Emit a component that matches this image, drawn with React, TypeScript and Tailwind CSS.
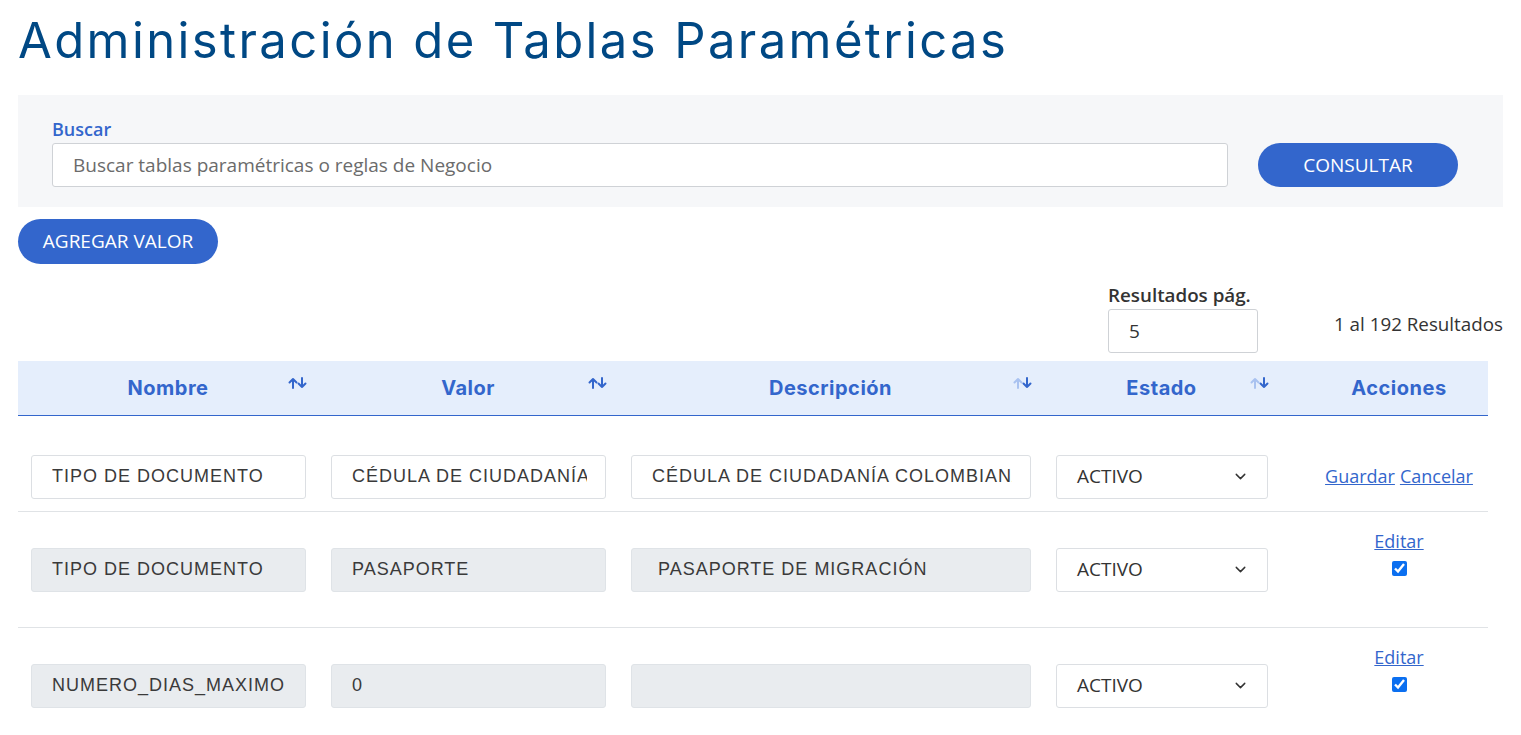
import React from "react";
import { ChevronDown } from "lucide-react";

const ui = { fontFamily: '"Open Sans", "Noto Sans", sans-serif' };
const mont = { fontFamily: 'Inter, "Noto Sans", sans-serif' };
const val = { fontFamily: '"Liberation Sans", Arial, sans-serif' };

function SortIcon({ lightUp }: { lightUp?: boolean }) {
  const up = lightUp ? "#a9c2f0" : "#3366cc";
  const down = "#3366cc";
  return (
    <svg width="20" height="12" viewBox="0 0 20 12" fill="none">
      <path d="M5 11V2M1.5 5.5L5 2l3.5 3.5" stroke={up} strokeWidth="2" strokeLinecap="round" strokeLinejoin="round" />
      <path d="M14 1v9M10.5 6.5L14 10l3.5-3.5" stroke={down} strokeWidth="2" strokeLinecap="round" strokeLinejoin="round" />
    </svg>
  );
}

function HeadCell({ w, label, sort, lightUp, pl }: { w: string; label: string; sort?: boolean; lightUp?: boolean; pl?: string }) {
  return (
    <div className={`relative flex items-center justify-center h-full ${w} ${pl ?? ""}`}>
      <span className="text-[20px] font-bold text-[#3366cc] tracking-[0.5px]" style={mont}>
        {label}
      </span>
      {sort && (
        <span className="absolute right-[10px] top-[16px]">
          <SortIcon lightUp={lightUp} />
        </span>
      )}
    </div>
  );
}

function ValInput({ text, disabled, w }: { text: string; disabled?: boolean; w: string }) {
  return (
    <div
      className={`${w} h-[44px] flex items-center pl-[20px] pr-[18px] rounded-[3px] border ${
        disabled ? "bg-[#e9ecef] border-[#dfe3e7]" : "bg-white border-[#dcdfe3]"
      }`}
    >
      <div className="flex-1 overflow-hidden whitespace-pre text-[18px] text-[#3a3a3a] tracking-[1px]" style={val}>
        {text}
      </div>
    </div>
  );
}

function EstadoSelect() {
  return (
    <div className="w-[212px] h-[44px] flex items-center justify-between pl-[20px] pr-[18px] bg-white border border-[#dcdfe3] rounded-[3px]">
      <span className="text-[19px] text-[#333]" style={ui}>ACTIVO</span>
      <ChevronDown size={17} strokeWidth={2} color="#333" />
    </div>
  );
}

type Row = { nombre: string; valor: string; desc: string; edit?: boolean };

const rows: Row[] = [
  { nombre: "TIPO DE DOCUMENTO", valor: "CÉDULA DE CIUDADANÍA", desc: "CÉDULA DE CIUDADANÍA COLOMBIANA", edit: true },
  { nombre: "TIPO DE DOCUMENTO", valor: "PASAPORTE", desc: " PASAPORTE DE MIGRACIÓN" },
  { nombre: "NUMERO_DIAS_MAXIMO", valor: "0", desc: "" },
];

export default function App() {
  return (
    <div className="bg-white min-h-[735px] pl-[18px] pr-[18px] overflow-hidden" style={ui}>
      <h1 className="text-[49px] leading-[58px] pt-[12px] text-[#004884] font-normal tracking-[2.4px] whitespace-nowrap" style={mont}>
        Administración de Tablas Paramétricas
      </h1>

      <div className="mt-[25px] w-[1485px] h-[112px] bg-[#f6f7f9] flex items-end pl-[34px] pr-[45px] pb-[20px] gap-[30px]">
        <div className="flex-1 flex flex-col">
          <label className="text-[18px] font-semibold text-[#3366cc] leading-[22px] mb-[3px]">Buscar</label>
          <div className="h-[44px] bg-white border border-[#cfd2d6] rounded-[3px] flex items-center pl-[20px]">
            <span className="text-[19px] text-[#6b6b6b]">Buscar tablas paramétricas o reglas de Negocio</span>
          </div>
        </div>
        <button className="w-[200px] h-[44px] rounded-full bg-[#3366cc] text-white text-[19px]">CONSULTAR</button>
      </div>

      <button className="mt-[12px] w-[200px] h-[45px] rounded-full bg-[#3366cc] text-white text-[19px]">AGREGAR VALOR</button>

      <div className="w-[1485px] flex justify-end items-end mt-[19px]">
        <div className="flex flex-col">
          <span className="text-[18.8px] font-semibold text-[#333] leading-[24px] mb-[2px]">Resultados pág.</span>
          <div className="w-[150px] h-[44px] border border-[#cfd2d6] rounded-[3px] flex items-center pl-[20px] bg-white">
            <span className="text-[19px] text-[#333]">5</span>
          </div>
        </div>
        <span className="ml-[76px] mb-[15px] text-[18.8px] text-[#333]">1 al 192 Resultados</span>
      </div>

      <div className="mt-[8px] w-[1470px]">
        <div className="flex h-[55px] bg-[#e5eefc] border-b border-[#3366cc]">
          <HeadCell w="w-[300px]" label="Nombre" sort />
          <HeadCell w="w-[300px]" label="Valor" sort />
          <HeadCell w="w-[425px]" label="Descripción" sort lightUp />
          <HeadCell w="w-[237px]" label="Estado" sort lightUp />
          <HeadCell w="w-[208px]" pl="pl-[30px]" label="Acciones" />
        </div>

        {rows.map((r, i) => (
          <div
            key={i}
            className={`flex ${r.edit ? "h-[95px] pt-[26px] items-center" : "h-[116px] items-center border-t border-[#e0e3e6]"}`}
          >
            <div className="w-[300px] pl-[13px]"><ValInput w="w-[275px]" text={r.nombre} disabled={!r.edit} /></div>
            <div className="w-[300px] pl-[13px]"><ValInput w="w-[275px]" text={r.valor} disabled={!r.edit} /></div>
            <div className="w-[425px] pl-[13px]"><ValInput w="w-[400px]" text={r.desc} disabled={!r.edit} /></div>
            <div className="w-[237px] pl-[13px]"><EstadoSelect /></div>
            {r.edit ? (
              <div className="w-[208px] pl-[30px] flex justify-center gap-[5px] text-[18px] text-[#3366cc]">
                <a className="underline cursor-pointer">Guardar</a>
                <a className="underline cursor-pointer">Cancelar</a>
              </div>
            ) : (
              <div className="w-[208px] pl-[30px] self-start pt-[17px] flex flex-col items-center">
                <a className="underline cursor-pointer text-[18px] leading-[24px] text-[#3366cc]">Editar</a>
                <input type="checkbox" defaultChecked className="mt-[8px] w-[15px] h-[15px] accent-[#0b6ff0]" />
              </div>
            )}
          </div>
        ))}
      </div>
    </div>
  );
}
